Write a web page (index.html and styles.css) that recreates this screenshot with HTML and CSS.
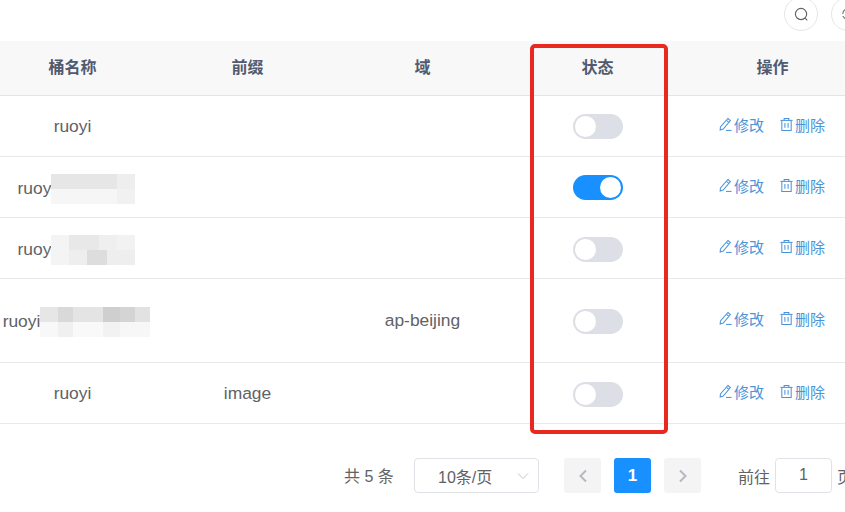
FILE: index.html
```html
<!DOCTYPE html>
<html lang="zh-CN">
<head>
  <meta charset="UTF-8" />
  <title>桶配置</title>
  <link rel="stylesheet" href="styles.css">
</head>
<body>
  <svg class="defs" width="0" height="0">
    <symbol id="i-edit" viewBox="0 0 16 16">
      <path d="M10.6 1.6l2.6 2.2-7.6 9-3.3 1.1.3-3.3z" />
      <path d="M9 3.5l2.6 2.2" />
      <path d="M8.5 14.3h6" />
    </symbol>
    <symbol id="i-del" viewBox="0 0 16 16">
      <path d="M1.5 3.6h13" />
      <path d="M5.5 3.6V1.5h5v2.1" />
      <path d="M3 3.6v10.9h10V3.6" />
      <path d="M6.3 6.5v5M9.7 6.5v5" />
    </symbol>
  </svg>

  <div class="toolbar">
    <button class="round-btn" type="button">
      <svg viewBox="0 0 16 16" width="15" height="15"><circle cx="7.5" cy="7.5" r="6" /><path d="M11.8 11.8l2.4 2.4" /></svg>
    </button>
    <button class="round-btn" type="button">
      <svg viewBox="0 0 16 16" width="14" height="14"><path d="M2 8a6 6 0 0 1 10.5-4l1.5 1.5M14 8a6 6 0 0 1-10.5 4L2 10.5" /></svg>
    </button>
  </div>

  <table class="data-table">
    <thead>
      <tr>
        <th>桶名称</th>
        <th>前缀</th>
        <th>域</th>
        <th>状态</th>
        <th>操作</th>
      </tr>
    </thead>
    <tbody>
      <tr>
        <td>ruoyi</td>
        <td></td>
        <td></td>
        <td><span class="switch"></span></td>
        <td class="ops"><a><svg><use href="#i-edit" /></svg>修改</a><a><svg><use href="#i-del" /></svg>删除</a></td>
      </tr>
      <tr>
        <td class="hidden-name">ruoy<span class="mosaic mosaic-a"></span></td>
        <td></td>
        <td></td>
        <td><span class="switch on"></span></td>
        <td class="ops"><a><svg><use href="#i-edit" /></svg>修改</a><a><svg><use href="#i-del" /></svg>删除</a></td>
      </tr>
      <tr>
        <td class="hidden-name">ruoy<span class="mosaic mosaic-b"></span></td>
        <td></td>
        <td></td>
        <td><span class="switch low"></span></td>
        <td class="ops"><a><svg><use href="#i-edit" /></svg>修改</a><a><svg><use href="#i-del" /></svg>删除</a></td>
      </tr>
      <tr class="tall">
        <td class="hidden-name">ruoyi<span class="mosaic mosaic-c"></span></td>
        <td></td>
        <td>ap-beijing</td>
        <td><span class="switch low"></span></td>
        <td class="ops"><a><svg><use href="#i-edit" /></svg>修改</a><a><svg><use href="#i-del" /></svg>删除</a></td>
      </tr>
      <tr>
        <td>ruoyi</td>
        <td>image</td>
        <td></td>
        <td><span class="switch low"></span></td>
        <td class="ops"><a><svg><use href="#i-edit" /></svg>修改</a><a><svg><use href="#i-del" /></svg>删除</a></td>
      </tr>
    </tbody>
  </table>

  <div class="pagination">
    <span class="total">共 5 条</span>
    <div class="page-size">
      <span>10条/页</span>
      <svg viewBox="0 0 12 8" width="12" height="8"><path d="M1 1.5l5 5 5-5" /></svg>
    </div>
    <div class="pager">
      <span class="page-btn"><svg viewBox="0 0 10 14" width="10" height="14"><path d="M8 1.5L2.5 7 8 12.5" /></svg></span>
      <span class="page-btn active">1</span>
      <span class="page-btn"><svg viewBox="0 0 10 14" width="10" height="14"><path d="M2 1.5L7.5 7 2 12.5" /></svg></span>
    </div>
    <div class="jump">
      <span>前往</span>
      <span class="jump-input">1</span>
      <span>页</span>
    </div>
  </div>

  <!-- 红框标注 -->
  <div class="mark"></div>
</body>
</html>
```

FILE: styles.css
```css
html, body {
  height: 100%;
}
body {
  margin: 0;
  overflow: hidden;
  position: relative;
  background: #fff;
  color: #606266;
  font-family: "Liberation Sans", "Noto Sans CJK SC", sans-serif;
  font-size: 17.4px;
}
.defs {
  position: absolute;
}

/* ---------- toolbar ---------- */
.toolbar {
  display: flex;
  gap: 13px;
  height: 41px;
  margin-left: 784px;
  width: 90px;
}
.round-btn {
  flex: none;
  width: 34px;
  height: 34px;
  margin-top: -3px;
  padding: 0;
  display: flex;
  align-items: center;
  justify-content: center;
  background: #fff;
  border: 1px solid #e4e6ea;
  border-radius: 50%;
}
.round-btn svg {
  fill: none;
  stroke: #5f6368;
  stroke-width: 1.2;
}

/* ---------- table ---------- */
.data-table {
  width: 875px;
  margin-left: -15px;
  table-layout: fixed;
  border-collapse: collapse;
}
.data-table th {
  height: 50px;
  padding: 0 0 4px;
  background: #f8f8f9;
  color: #515a6e;
  font-size: 16px;
  font-weight: 700;
  text-align: center;
  border-bottom: 1px solid #e1e4e8;
}
.data-table td {
  height: 60px;
  padding: 0;
  text-align: center;
  border-bottom: 1px solid #e6e8eb;
}
.data-table .tall td {
  height: 83px;
}
.data-table td.hidden-name {
  height: 0;
  padding: 3px 0 0 8px;
}
.mosaic {
  display: inline-block;
  height: 30px;
  vertical-align: middle;
}
.mosaic-a {
  width: 84px;
  background:
    linear-gradient(to right, #e6e6e6 0 66px, #eeeeee 66px) top / 100% 15px no-repeat,
    linear-gradient(to right, #f6f6f6 0 66px, #f1f1f1 66px) bottom / 100% 15px no-repeat;
}
.mosaic-b {
  width: 84px;
  background:
    linear-gradient(to right, #f4f4f4 0 18px, #e8e8e8 18px 48px, #efefef 48px 66px, #f2f2f2 66px) top / 100% 15px no-repeat,
    linear-gradient(to right, #f4f4f4 0 18px, #eeeeee 18px 36px, #dddddd 36px 56px, #eeeeee 56px) bottom / 100% 15px no-repeat;
}
.mosaic-c {
  width: 110px;
  background:
    linear-gradient(to right, #e6e6e6 0 18px, #d9d9d9 18px 33px, #e4e4e4 33px 63px, #cfcfcf 63px 80px, #d4d4d4 80px 95px, #e2e2e2 95px) top / 100% 15px no-repeat,
    linear-gradient(to right, #f8f8f8 0 18px, #f0f0f0 18px 33px, #f9f9f9 33px 63px, #f2f2f2 63px 80px, #f7f7f7 80px) bottom / 100% 15px no-repeat;
}

/* ---------- switch ---------- */
.switch {
  display: block;
  position: relative;
  width: 50px;
  height: 25px;
  margin: 0 auto;
  background: #dcdfe6;
  border-radius: 13px;
}
.switch.low {
  margin-top: 2px;
}
.switch::after {
  content: "";
  position: absolute;
  top: 2px;
  left: 2px;
  width: 21px;
  height: 21px;
  background: #fff;
  border-radius: 50%;
}
.switch.on {
  background: #1890ff;
}
.switch.on::after {
  left: 27px;
}

/* ---------- row actions ---------- */
.data-table td.ops {
  height: 56px;
  font-size: 15px;
  color: #4a94d8;
  white-space: nowrap;
  text-align: left;
  padding: 0 0 4px 33px;
}
.ops a {
  display: inline-flex;
  align-items: center;
  margin-right: 15px;
}
.ops svg {
  width: 15px;
  height: 15px;
  margin-right: 1px;
  fill: none;
  stroke: #4a94d8;
  stroke-width: 1.1;
}

/* ---------- pagination ---------- */
.pagination {
  display: flex;
  align-items: center;
  width: 860px;
  height: 35px;
  margin-top: 34px;
  padding-left: 344px;
  box-sizing: border-box;
  font-size: 16px;
}
.total {
  width: 70px;
  flex: none;
  margin-top: -2px;
}
.page-size {
  flex: none;
  box-sizing: border-box;
  width: 125px;
  height: 35px;
  display: flex;
  align-items: center;
  justify-content: space-between;
  padding: 0 9px 0 23px;
  border: 1px solid #dfe3e8;
  border-radius: 4px;
}
.page-size svg {
  fill: none;
  stroke: #c0c4cc;
  stroke-width: 1;
}
.pager {
  flex: none;
  display: flex;
  gap: 13px;
  margin-left: 25px;
}
.page-btn {
  width: 37px;
  height: 35px;
  display: flex;
  align-items: center;
  justify-content: center;
  background: #f4f4f5;
  border-radius: 3px;
}
.page-btn svg {
  fill: none;
  stroke: #b4b8bf;
  stroke-width: 2;
}
.page-btn.active {
  background: #1890ff;
  color: #fff;
  font-size: 17px;
  font-weight: 700;
}
.jump {
  flex: none;
  display: flex;
  align-items: center;
  gap: 5px;
  margin-left: 37px;
}
.jump-input {
  box-sizing: border-box;
  width: 57px;
  height: 35px;
  line-height: 31px;
  text-align: center;
  border: 1px solid #dfe3e8;
  border-radius: 4px;
}

/* ---------- red annotation ---------- */
.mark {
  position: absolute;
  left: 530px;
  top: 44px;
  width: 138px;
  height: 390px;
  box-sizing: border-box;
  border: 4px solid #e9291f;
  border-radius: 5px;
}
```
